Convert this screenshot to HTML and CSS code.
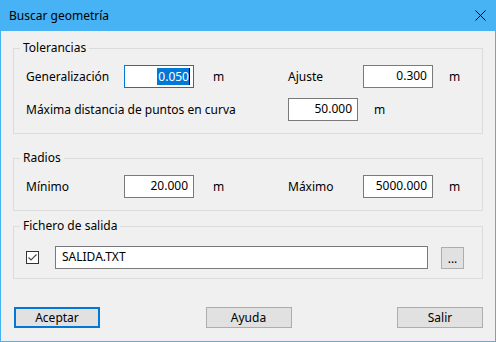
FILE: index.html
```html
<!DOCTYPE html>
<html lang="es">
<head>
    <meta charset="UTF-8">
    <title>Buscar geometría</title>
    <link rel="stylesheet" href="styles.css">
</head>
<body>
<div class="window">
    <div class="titlebar">
        <span class="title">Buscar geometría</span>
        <svg class="close" width="11" height="11" viewBox="0 0 11 11">
            <path d="M0.5 0.5 L10.5 10.5 M10.5 0.5 L0.5 10.5" stroke="#000" stroke-width="1" fill="none"/>
        </svg>
    </div>

    <div class="content">
        <fieldset class="group group-tol">
            <legend>Tolerancias</legend>
            <div class="group-body">
                <div class="row">
                    <span class="lbl lbl-a">Generalización</span>
                    <div class="field focused"><span class="sel">0.050</span><span class="caret"></span></div>
                    <span class="unit unit-a">m</span>
                    <span class="lbl lbl-b">Ajuste</span>
                    <div class="field">0.300</div>
                    <span class="unit unit-b">m</span>
                </div>
                <div class="row">
                    <span class="lbl lbl-long">Máxima distancia de puntos en curva</span>
                    <div class="field">50.000</div>
                    <span class="unit unit-b">m</span>
                </div>
            </div>
        </fieldset>

        <fieldset class="group group-rad">
            <legend>Radios</legend>
            <div class="group-body">
                <div class="row">
                    <span class="lbl lbl-a">Mínimo</span>
                    <div class="field">20.000</div>
                    <span class="unit unit-a">m</span>
                    <span class="lbl lbl-b">Máximo</span>
                    <div class="field">5000.000</div>
                    <span class="unit unit-b">m</span>
                </div>
            </div>
        </fieldset>

        <fieldset class="group group-file">
            <legend>Fichero de salida</legend>
            <div class="group-body">
                <div class="row">
                    <span class="check">
                        <svg width="11" height="11" viewBox="0 0 11 11">
                            <path d="M1.5 5.5 L4 8 L9.5 2.5" stroke="#4a4a4a" stroke-width="1.2" fill="none"/>
                        </svg>
                    </span>
                    <div class="field field-file">SALIDA.TXT</div>
                    <button class="browse">...</button>
                </div>
            </div>
        </fieldset>

        <div class="buttons">
            <button class="btn default">Aceptar</button>
            <button class="btn">Ayuda</button>
            <button class="btn">Salir</button>
        </div>
    </div>
</div>
</body>
</html>
```

FILE: styles.css
```css
body {
    margin: 0;
    padding: 0;
    font-family: "Noto Sans", "Open Sans", sans-serif;
    font-size: 12px;
    color: #000;
}
.window {
    width: 496px;
    height: 342px;
    box-sizing: border-box;
    border: 1px solid #47b2f4;
    border-top: none;
    background-color: #f0f0f0;
    display: flex;
    flex-direction: column;
}
.titlebar {
    height: 31px;
    margin: 0 -1px;
    background-color: #47b2f4;
    display: flex;
    align-items: center;
    justify-content: space-between;
    padding: 0 10px 0 9px;
}
.title {
    font-size: 12px;
}
.content {
    padding: 9px 12px 0 12px;
}
.group {
    border: 1px solid #dcdcdc;
    margin: 0;
    padding: 0;
    min-width: 0;
}
.group legend {
    margin-left: 6px;
    padding: 0 3px;
    line-height: 16px;
}
.group-body {
    padding-left: 12px;
}
.group-tol .group-body {
    padding-top: 9px;
    padding-bottom: 12px;
}
.group-rad {
    margin-top: 16px;
}
.group-rad .group-body {
    padding-top: 9px;
    padding-bottom: 12px;
}
.group-file {
    margin-top: 7px;
}
.group-file .group-body {
    padding-top: 12px;
    padding-bottom: 9px;
}
.row {
    display: flex;
    align-items: center;
    height: 23px;
}
.row + .row {
    margin-top: 10px;
}
.lbl-a { width: 98px; }
.lbl-b { width: 75px; }
.lbl-long { width: 262px; }
.unit-a { width: 75px; padding-left: 19px; }
.unit-b { padding-left: 16px; }
.field {
    width: 70px;
    height: 23px;
    box-sizing: border-box;
    border: 1px solid #7a7a7a;
    background-color: #fff;
    text-align: right;
    padding-right: 5px;
    line-height: 19px;
    white-space: nowrap;
}
.field.focused {
    border-color: #0078d7;
    display: flex;
    justify-content: flex-end;
    align-items: flex-start;
    padding-top: 2px;
    padding-right: 3px;
}
.sel {
    background-color: #0078d7;
    color: #fff;
    line-height: 17px;
    padding-left: 1px;
}
.caret {
    width: 1px;
    height: 17px;
    background-color: #000;
}
.check {
    width: 13px;
    height: 13px;
    box-sizing: border-box;
    border: 1px solid #333;
    background-color: #fff;
    display: flex;
    align-items: center;
    justify-content: center;
    margin-right: 16px;
}
.field-file {
    width: 373px;
    text-align: left;
    padding-left: 6px;
}
.browse {
    width: 23px;
    height: 22px;
    margin-left: 13px;
    border: 1px solid #adadad;
    background-color: #e1e1e1;
    font-family: inherit;
    font-size: 12px;
    padding: 2px 0 0 0;
    line-height: 12px;
}
.buttons {
    display: flex;
    justify-content: space-between;
    padding-left: 1px;
    margin-top: 28px;
}
.btn {
    width: 86px;
    height: 21px;
    box-sizing: border-box;
    border: 1px solid #adadad;
    background-color: #e1e1e1;
    font-family: inherit;
    font-size: 12px;
    padding: 0;
}
.btn.default {
    border: 2px solid #0078d7;
}
```
